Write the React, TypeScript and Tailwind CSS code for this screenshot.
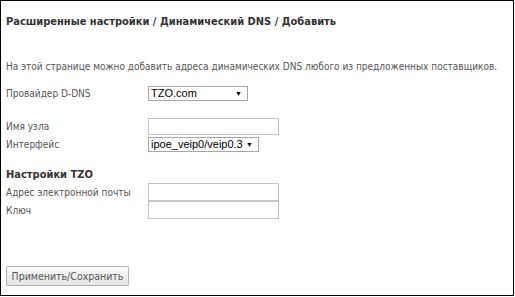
import React from "react";

const font = { fontFamily: '"DejaVu Sans Condensed", "DejaVu Sans", sans-serif' };

function Select({ value, width }: { value: string; width: string }) {
  return (
    <div
      className={`${width} h-[15px] border border-[#a6a6a6] bg-white flex items-center justify-between pl-[2px] pr-[5px] text-[11px] leading-none text-black`}
      style={{ fontFamily: '"Liberation Sans", Arial, sans-serif' }}
    >
      <span>{value}</span>
      <span className="text-[7px]">▼</span>
    </div>
  );
}

function Input() {
  return <div className="w-[131px] h-[18px] border border-[#c4c4c4] bg-white" />;
}

function Row({ label, children, h }: { label: string; children?: React.ReactNode; h: string }) {
  return (
    <div className={`flex items-center ${h}`}>
      <div className="w-[142px] text-[10px] text-[#555] whitespace-nowrap">{label}</div>
      {children}
    </div>
  );
}

export default function App() {
  return (
    <div className="w-[515px] h-[297px] bg-white">
      <div className="w-[514px] h-[296px] border border-black flex flex-col pl-[5px]" style={font}>
        <div className="mt-[13px] text-[11px] font-bold text-[#333] leading-[16px] whitespace-nowrap">
          Расширенные настройки / Динамический DNS / Добавить
        </div>
        <div className="mt-[29px] text-[10px] text-[#555] leading-[16px] whitespace-nowrap">
          На этой странице можно добавить адреса динамических DNS любого из предложенных поставщиков.
        </div>
        <div className="mt-[10px]">
          <Row label="Провайдер D-DNS" h="h-[16px]">
            <Select value="TZO.com" width="w-[100px]" />
          </Row>
          <div className="mt-[17px]" />
          <Row label="Имя узла" h="h-[17px]">
            <div className="w-[131px] h-[17px] border border-[#c4c4c4] bg-white" />
          </Row>
          <div className="mt-[2px]" />
          <Row label="Интерфейс" h="h-[15px]">
            <Select value="ipoe_veip0/veip0.3" width="w-[111px]" />
          </Row>
        </div>
        <div className="mt-[16px] text-[11px] font-bold text-[#333] leading-[14px]">Настройки TZO</div>
        <div className="mt-[1px]">
          <Row label="Адрес электронной почты" h="h-[18px]">
            <Input />
          </Row>
          <Row label="Ключ" h="h-[18px]">
            <Input />
          </Row>
        </div>
        <div className="mt-[44px]">
          <button className="w-[123px] h-[20px] border border-[#b0b0b0] rounded-[2px] bg-gradient-to-b from-[#fafafa] to-[#e4e4e4] text-[10.5px] text-[#555] leading-none whitespace-nowrap">
            Применить/Сохранить
          </button>
        </div>
      </div>
    </div>
  );
}
